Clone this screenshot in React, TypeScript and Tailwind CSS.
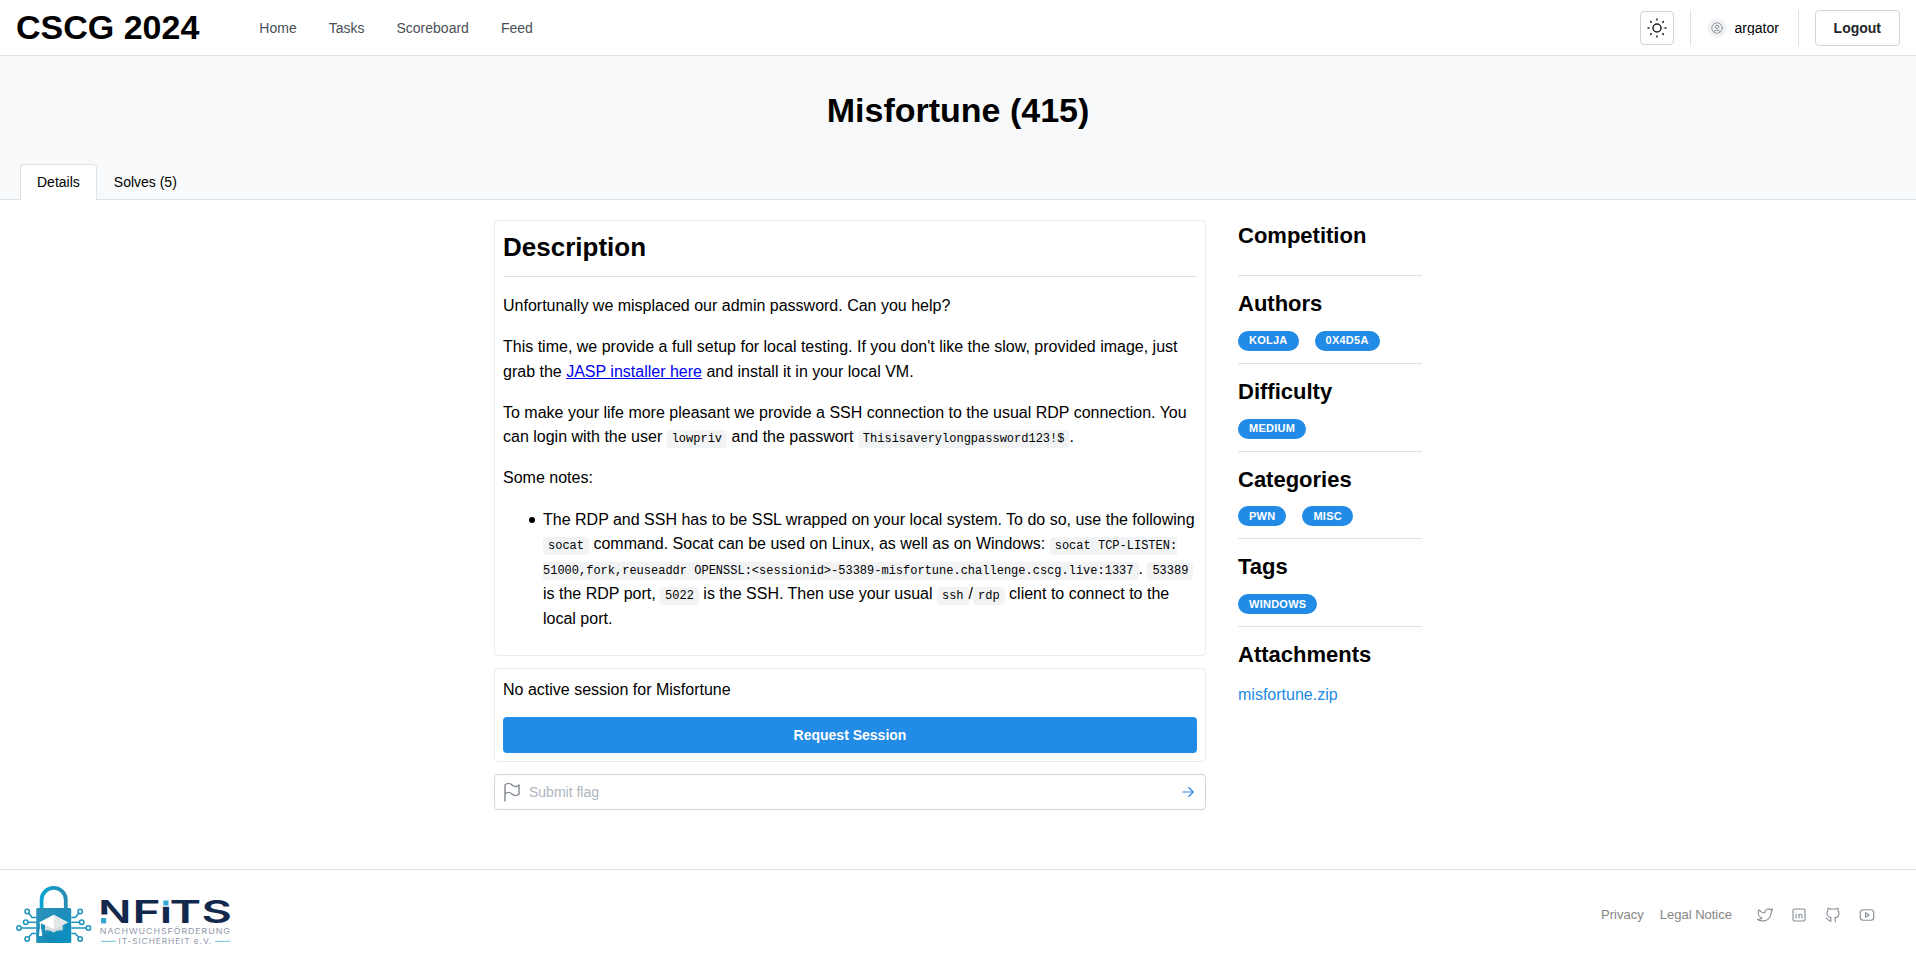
import React from "react";

type IconProps = { size: number; className?: string; children: React.ReactNode };

function Icon({ size, className, children }: IconProps) {
  return (
    <svg
      width={size}
      height={size}
      viewBox="0 0 24 24"
      fill="none"
      stroke="currentColor"
      strokeWidth={1.5}
      strokeLinecap="round"
      strokeLinejoin="round"
      className={className}
    >
      {children}
    </svg>
  );
}

function Code({ children }: { children: React.ReactNode }) {
  return (
    <code className="rounded bg-[#f1f3f5] px-[5px] py-[2px] font-['Liberation_Mono',monospace] text-[12px] leading-[1.55]">
      {children}
    </code>
  );
}

function Badge({ children }: { children: React.ReactNode }) {
  return (
    <span className="inline-flex h-5 items-center rounded-full border border-transparent bg-[#228be6] px-[10px] pb-[0.7px] text-[11px] leading-[18px] font-bold tracking-[0.25px] text-white uppercase">
      {children}
    </span>
  );
}

function Section({ title, badges }: { title: string; badges: string[] }) {
  return (
    <>
      <h3 className="-mb-px pt-px text-[22px] leading-[1.4] font-bold">{title}</h3>
      <div className="flex gap-4">
        {badges.map((b) => (
          <Badge key={b}>{b}</Badge>
        ))}
      </div>
      <div className="border-t border-[#dee2e6]" />
    </>
  );
}

function Logo() {
  const nodes = [
    { y: 911.5, x: 27.2, path: "M29 913.5 L32 917.5 H36" },
    { y: 922.3, x: 25.7, path: "M28 922.3 H36" },
    { y: 928, x: 19, path: "M21.5 928 H36" },
    { y: 939, x: 27.2, path: "M29 937 L32 933.5 H36" },
  ];
  const arms = nodes.map((n) => (
    <g key={n.y}>
      <circle cx={n.x} cy={n.y} r="2.2" />
      <path d={n.path} />
    </g>
  ));
  return (
    <svg width="216" height="58" viewBox="16 886 216 58" className="overflow-visible">
      <defs>
        <linearGradient id="body" x1="0" y1="0" x2="1" y2="1">
          <stop offset="0" stopColor="#2f93bb" />
          <stop offset="0.5" stopColor="#1d8db9" />
          <stop offset="1" stopColor="#0a9fd0" />
        </linearGradient>
        <linearGradient id="shackle" x1="0" y1="0" x2="1" y2="0">
          <stop offset="0" stopColor="#0aa5d3" />
          <stop offset="1" stopColor="#2a8db6" />
        </linearGradient>
      </defs>
      <g fill="none" stroke="#1a93bb" strokeWidth="1.5">
        {arms}
        <g transform="translate(107.4 0) scale(-1 1)">{arms}</g>
      </g>
      <path d="M41.6 909 V900 A12.1 12.1 0 0 1 65.8 900 V909" fill="none" stroke="url(#shackle)" strokeWidth="3.8" />
      <rect x="36.2" y="908" width="35" height="35" rx="1.5" fill="url(#body)" />
      <path d="M42 935 L50 943 H69.7 A1.5 1.5 0 0 0 71.2 941.5 V926 L67.5 922.5 L62 932 Z" fill="#087fae" opacity="0.35" />
      <path d="M45 922 L53.7 927 L62.7 922 V930.5 Q58 929.5 53.7 932.5 Q49 929.5 45 930.5 Z" fill="#d6dbe0" />
      <path d="M39 922.5 L53.7 914.8 L68 922.5 L53.7 929 Z" fill="#fff" />
      <path d="M53.7 914.8 L68 922.5 L53.7 929 Z" fill="#e4e7ea" />
      <path d="M40.4 922.5 V930" stroke="#fff" strokeWidth="1" />
      <path d="M39.6 929 H41.4 L42.3 936 H39 Z" fill="#fff" />
      <g fill="#12284c" fontFamily="Inter, sans-serif" fontWeight="600" fontSize="31.5">
        <text x="98.2" y="923.4" textLength="33" lengthAdjust="spacingAndGlyphs">N</text>
        <text x="132.4" y="923.4" textLength="28" lengthAdjust="spacingAndGlyphs">F</text>
        <text x="160.2" y="923.4" textLength="11.4" fontWeight="700" lengthAdjust="spacingAndGlyphs">I</text>
        <text x="169.6" y="923.4" textLength="31.6" lengthAdjust="spacingAndGlyphs">T</text>
        <text x="201.4" y="923.4" textLength="30.4" lengthAdjust="spacingAndGlyphs">S</text>
      </g>
      <rect x="99" y="914.5" width="9" height="10" fill="#fff" />
      <rect x="101" y="918" width="5.2" height="5.4" fill="#31a9d3" />
      <rect x="162" y="899" width="8" height="7.8" fill="#fff" />
      <rect x="163.3" y="900.5" width="5.2" height="5" fill="#31a9d3" />
      <g fill="#8f97ac" fontFamily="Inter, sans-serif" fontSize="7.6">
        <text x="99.8" y="934" textLength="131" lengthAdjust="spacingAndGlyphs" letterSpacing="0.8">
          NACHWUCHSFÖRDERUNG
        </text>
        <text x="118.6" y="943.8" textLength="93.5" lengthAdjust="spacingAndGlyphs" letterSpacing="0.8">
          IT-SICHERHEIT e.V.
        </text>
      </g>
      <path d="M101 941.3 H116 M215 941.3 H230" stroke="#6fbfd8" strokeWidth="1" />
    </svg>
  );
}

const SOCIAL = [
  <path
    key="t"
    d="M22 4.01c-1 .49 -1.98 .689 -3 .99c-1.121 -1.265 -2.783 -1.335 -4.38 -.737s-2.643 2.06 -2.62 3.737v1c-3.245 .083 -6.135 -1.395 -8 -4c0 0 -4.182 7.433 4 11c-1.872 1.247 -3.739 2.088 -6 2c3.308 1.803 6.913 2.423 10.034 1.517c3.58 -1.04 6.522 -3.723 7.651 -7.742a13.84 13.84 0 0 0 .497 -3.753c0 -.249 1.51 -2.772 1.818 -4.013z"
  />,
  <g key="l">
    <rect x="4" y="4" width="16" height="16" rx="2" />
    <path d="M8 11v5M8 8v.01M12 16v-5M16 16v-3a2 2 0 0 0 -4 0" />
  </g>,
  <path
    key="g"
    d="M9 19c-4.3 1.4 -4.3 -2.5 -6 -3m12 5v-3.5c0 -1 .1 -1.4 -.5 -2c2.8 -.3 5.5 -1.4 5.5 -6a4.6 4.6 0 0 0 -1.3 -3.2a4.2 4.2 0 0 0 -.1 -3.2s-1.1 -.3 -3.5 1.3a12.3 12.3 0 0 0 -6.2 0c-2.4 -1.6 -3.5 -1.3 -3.5 -1.3a4.2 4.2 0 0 0 -.1 3.2a4.6 4.6 0 0 0 -1.3 3.2c0 4.6 2.7 5.7 5.5 6c-.6 .6 -.6 1.2 -.5 2v3.5"
  />,
  <g key="y">
    <rect x="3" y="5" width="18" height="14" rx="4" />
    <path d="M10 9l5 3l-5 3z" />
  </g>,
];

export default function App() {
  return (
    <div className="flex h-[959px] flex-col overflow-hidden bg-white font-['Liberation_Sans',Arial,sans-serif] text-[16px] leading-[1.55] text-black">
      <header className="flex h-14 shrink-0 items-center border-b border-[#dee2e6] px-4">
        <h1 className="text-[34px] leading-[1.3] font-bold">CSCG 2024</h1>
        <nav className="ml-[60px] flex gap-8 text-[14px] leading-none font-medium text-[#495057]">
          <a>Home</a>
          <a>Tasks</a>
          <a>Scoreboard</a>
          <a>Feed</a>
        </nav>
        <div className="ml-auto flex items-center gap-4">
          <button className="flex size-[34px] items-center justify-center rounded border border-[#ced4da] text-[#212529]">
            <Icon size={24} className="shrink-0">
              <circle cx="12" cy="12" r="4" />
              <path d="M3 12h1m8 -9v1m8 8h1m-9 8v1m-6.4 -15.4l.7 .7m12.1 -.7l-.7 .7m0 11.4l.7 .7m-12.1 -.7l-.7 .7" />
            </Icon>
          </button>
          <div className="h-9 w-px bg-[#dee2e6]" />
          <div className="flex w-[75px] items-center gap-2">
            <span className="flex size-5 shrink-0 items-center justify-center rounded-full bg-[#f1f3f5] text-[#868e96]">
              <Icon size={14}>
                <circle cx="12" cy="12" r="9" />
                <circle cx="12" cy="10" r="3" />
                <path d="M6.168 18.849a4 4 0 0 1 3.832 -2.849h4a4 4 0 0 1 3.834 2.855" />
              </Icon>
            </span>
            <span className="overflow-hidden text-[14px] leading-none">argator</span>
          </div>
          <div className="h-9 w-px bg-[#dee2e6]" />
          <button className="h-9 rounded border border-[#ced4da] px-[18px] text-[14px] leading-none font-bold text-[#212529]">
            Logout
          </button>
        </div>
      </header>

      <div className="flex h-36 shrink-0 flex-col justify-between border-b border-[#dee2e6] bg-[#f8f9fa]">
        <h1 className="pt-8 text-center text-[34px] leading-[1.3] font-bold">Misfortune (415)</h1>
        <div className="-mb-px flex px-5 text-[14px] leading-none">
          <div className="rounded-t border border-b-0 border-[#dee2e6] bg-white px-4 pt-[10px] pb-[11px]">Details</div>
          <div className="border border-b-0 border-transparent px-4 pt-[10px] pb-[11px]">Solves (5)</div>
        </div>
      </div>

      <main className="mx-auto flex w-[928px] grow gap-8 pt-5">
        <div className="flex w-[712px] flex-col gap-3">
          <section className="rounded border border-[#e9ecef] p-2">
            <h2 className="-mb-px pt-px text-[26px] leading-[1.35] font-bold">Description</h2>
            <div className="mt-3 border-t border-[#dee2e6]" />
            <div className="pt-px">
              <p className="my-4">Unfortunally we misplaced our admin password. Can you help?</p>
              <p className="my-4">
                This time, we provide a full setup for local testing. If you don't like the slow, provided image, just
                grab the <a className="text-[#0000ee] underline">JASP installer here</a> and install it in your local
                VM.
              </p>
              <p className="mt-[16.2px] mb-[15.8px]">
                To make your life more pleasant we provide a SSH connection to the usual RDP connection. You can login
                with the user <Code>lowpriv</Code> and the passwort <Code>Thisisaverylongpassword123!$</Code>.
              </p>
              <p className="-mt-[0.2px] mb-4 pt-[0.2px]">Some notes:</p>
              <ul className="mt-[16.65px] mb-[15.35px] pl-10">
                <li className="relative before:absolute before:top-[9px] before:-left-[14px] before:size-[6px] before:rounded-full before:bg-black">
                  The RDP and SSH has to be SSL wrapped on your local system. To do so, use the following{" "}
                  <Code>socat</Code> command. Socat can be used on Linux, as well as on Windows:{" "}
                  <Code>
                    socat TCP-LISTEN:
                    <wbr />
                    51000,fork,reuseaddr OPENSSL:&lt;sessionid&gt;-53389-misfortune.challenge.cscg.live:1337
                  </Code>
                  . <Code>53389</Code> is the RDP port, <Code>5022</Code> is the SSH. Then use your usual{" "}
                  <Code>ssh</Code>/<Code>rdp</Code> client to connect to the local port.
                </li>
              </ul>
            </div>
          </section>

          <section className="rounded border border-[#e9ecef] p-2">
            <p className="pt-px">No active session for Misfortune</p>
            <button className="mt-[14px] block h-9 w-full rounded bg-[#228be6] text-[14px] leading-none font-bold text-white">
              Request Session
            </button>
          </section>

          <div className="flex h-9 shrink-0 items-center rounded border border-[#ced4da]">
            <span className="flex w-[34px] justify-center text-[#868e96]">
              <Icon size={24}>
                <path d="M5 5a5 5 0 0 1 7 0a5 5 0 0 0 7 0v9a5 5 0 0 1 -7 0a5 5 0 0 0 -7 0v-9zM5 21v-7" />
              </Icon>
            </span>
            <span className="grow text-[14px] leading-none text-[#adb5bd]">Submit flag</span>
            <span className="flex w-[34px] justify-center text-[#228be6]">
              <Icon size={18}>
                <path d="M5 12h14M13 18l6 -6M13 6l6 6" />
              </Icon>
            </span>
          </div>
        </div>

        <aside className="flex w-[184px] flex-col gap-3 pt-[0.15px]">
          <Section title="Competition" badges={[]} />
          <Section title="Authors" badges={["Kolja", "0x4d5a"]} />
          <Section title="Difficulty" badges={["Medium"]} />
          <Section title="Categories" badges={["pwn", "misc"]} />
          <Section title="Tags" badges={["Windows"]} />
          <h3 className="pt-px text-[22px] leading-[1.4] font-bold">Attachments</h3>
          <a className="text-[#228be6]">misfortune.zip</a>
        </aside>
      </main>

      <footer className="flex h-[90px] shrink-0 items-start border-t border-[#dee2e6] pt-4 pr-8 pl-4">
        <Logo />
        <div className="ml-auto flex h-[57px] items-center gap-4 text-[13px] leading-none text-[#868686]">
          <a>Privacy</a>
          <a>Legal Notice</a>
          <div className="flex text-[#868e96]">
            {SOCIAL.map((shape, i) => (
              <span key={i} className="flex size-[34px] items-center justify-center">
                <Icon size={18}>{shape}</Icon>
              </span>
            ))}
          </div>
        </div>
      </footer>
    </div>
  );
}
